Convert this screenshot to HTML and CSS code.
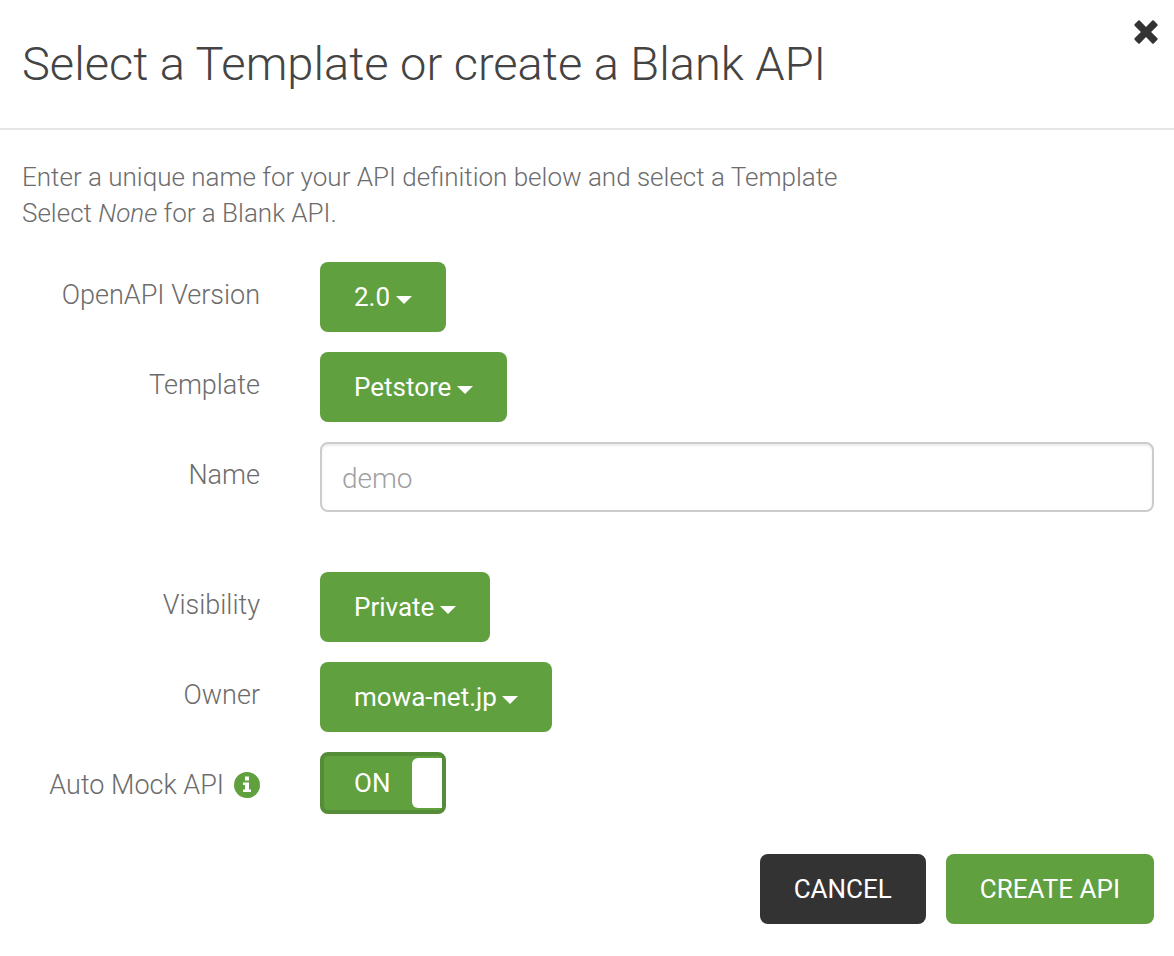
FILE: index.html
```html
<!DOCTYPE html>
<html lang="en">
<head>
  <meta charset="UTF-8" />
  <meta name="viewport" content="width=device-width, initial-scale=1.0"/>
  <title>Create API</title>
  <link rel="stylesheet" href="styles.css">
</head>
<body>
  <div class="modal">
    <header class="modal-header">
      <h1>Select a Template or create a Blank API</h1>
      <button type="button" class="close" aria-label="Close">
        <svg viewBox="0 0 24 24" width="24" height="24"><path d="M4.300.600Q5 0 5.700.600L12 6.900 18.300.600Q19 0 19.700.600L23.400 4.300Q24 5 23.400 5.700L17.100 12 23.400 18.300Q24 19 23.400 19.700L19.700 23.400Q19 24 18.300 23.400L12 17.100 5.700 23.400Q5 24 4.300 23.400L.600 19.700Q0 19 .600 18.300L6.900 12 .600 5.700Q0 5 .600 4.300Z"/></svg>
      </button>
    </header>
    <form class="modal-body">
      <p class="intro">Enter a unique name for your API definition below and select a Template<br>Select <em>None</em> for a Blank API.</p>

      <div class="row">
        <label for="version">OpenAPI Version</label>
        <select id="version" class="dropdown"><option>2.0</option></select>
      </div>
      <div class="row">
        <label for="template">Template</label>
        <select id="template" class="dropdown"><option>Petstore</option></select>
      </div>
      <div class="row row-name">
        <label for="name">Name</label>
        <input type="text" id="name" class="text-field" placeholder="demo" />
      </div>
      <div class="row">
        <label for="visibility">Visibility</label>
        <select id="visibility" class="dropdown"><option>Private</option></select>
      </div>
      <div class="row">
        <label for="owner">Owner</label>
        <select id="owner" class="dropdown"><option>mowa-net.jp</option></select>
      </div>
      <div class="row">
        <label for="mock">Auto Mock API
          <svg class="info" viewBox="0 0 26 26" width="26" height="26"><circle cx="13" cy="13" r="13"/><path d="M11 4.500h4v4h-4zM9 10.500h6v7h2v2.500H9v-2.500h2v-4.500H9z"/></svg>
        </label>
        <div class="toggle">
          <input type="checkbox" id="mock" checked />
          <label for="mock" class="toggle-face"><span>ON</span></label>
        </div>
      </div>

      <footer class="modal-footer">
        <button type="button" class="btn btn-dark">CANCEL</button>
        <button type="submit" class="btn">CREATE API</button>
      </footer>
    </form>
  </div>
</body>
</html>
```

FILE: styles.css
```css
:root {
  --green: #60a03f;
  --green-dark: #548c37;
  --dark: #333333;
  --text: #6c6c6c;
  --title: #444444;
}

* {
  box-sizing: border-box;
  margin: 0;
  padding: 0;
  font-family: Roboto, sans-serif;
}

body {
  background: #ffffff;
  color: var(--text);
  font-size: 27px;
  font-weight: 300;
}

.modal-header {
  display: flex;
  align-items: flex-start;
  justify-content: space-between;
  padding: 20px 16px 20px 22px;
  border-bottom: 2px solid #e5e5e5;
}

.modal-header h1 {
  font-size: 47px;
  font-weight: 300;
  line-height: 88px;
  color: var(--title);
}

.close {
  border: none;
  background: none;
  cursor: pointer;
}

.close svg {
  display: block;
  fill: var(--dark);
}

.modal-body {
  padding: 29px 20px;
}

.intro {
  padding: 0 2px;
  font-size: 26px;
  line-height: 36px;
  margin-bottom: 31px;
}

.row {
  display: grid;
  grid-template-columns: 240px 1fr;
  column-gap: 60px;
  align-items: start;
  justify-items: start;
  margin-bottom: 20px;
}

.row-name {
  margin-bottom: 60px;
}

.row > label {
  display: flex;
  align-items: center;
  gap: 10px;
  justify-self: end;
  line-height: 66px;
  white-space: nowrap;
}

.info {
  fill: var(--green);
}

.info path {
  fill: #ffffff;
}

.dropdown,
.btn {
  height: 70px;
  border: none;
  border-radius: 8px;
  background: var(--green);
  color: #ffffff;
  font-size: 26px;
  font-weight: 400;
  cursor: pointer;
}

.dropdown {
  appearance: none;
  padding: 0 55px 0 34px;
  background: var(--green) url("data:image/svg+xml,%3Csvg xmlns='http://www.w3.org/2000/svg' width='16' height='8'%3E%3Cpath d='M0 0h16L8 8z' fill='white'/%3E%3C/svg%3E") no-repeat right 34px top 34px;
}

.text-field {
  width: 100%;
  height: 70px;
  padding: 2px 20px 0;
  border: 2px solid #cccccc;
  border-radius: 8px;
  box-shadow: inset 0 2px 2px rgba(0, 0, 0, 0.075);
  color: var(--title);
  font-size: 28px;
  font-weight: 300;
}

.text-field::placeholder {
  color: #a0a0a0;
}

.toggle input {
  position: absolute;
  opacity: 0;
}

.toggle-face {
  display: flex;
  align-items: center;
  justify-content: space-between;
  width: 126px;
  height: 62px;
  padding-left: 30px;
  border: 4px solid var(--green-dark);
  border-radius: 8px;
  background: var(--green);
  color: #ffffff;
  font-size: 26px;
  font-weight: 400;
  cursor: pointer;
}

.toggle-face::after {
  content: "";
  width: 30px;
  height: 50px;
  border-radius: 6px 0 0 6px;
  background: #ffffff;
}

.modal-footer {
  display: flex;
  justify-content: flex-end;
  gap: 20px;
  padding-top: 16px;
}

.btn {
  padding: 0 34px;
}

.btn-dark {
  background: var(--dark);
}
```
